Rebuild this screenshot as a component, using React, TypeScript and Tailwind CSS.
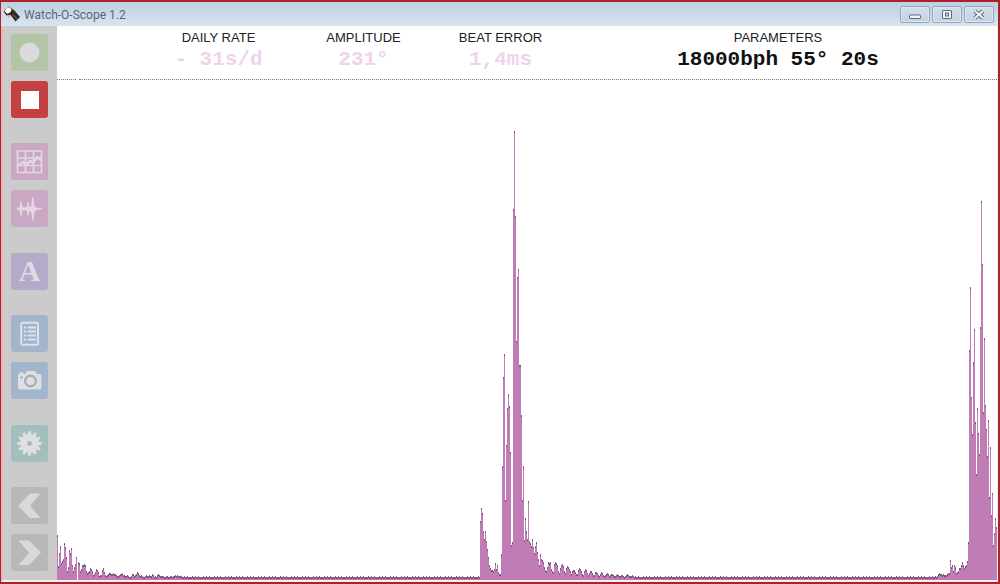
import React from 'react';

const CHART_WIDTH = 940;
const CHART_HEIGHT = 500;

const onset = [
  44, 13, 26, 33, 16, 18, 20, 36, 32, 22, 8, 12, 29, 26, 31, 14, 8, 12, 15, 22, 0, 17, 16, 8, 10, 14, 14, 15, 14, 8, 6, 7,
  8, 11, 10, 8, 4, 5, 7, 10, 9, 7, 3, 4, 4, 9, 11, 7, 4, 3, 4, 5, 6, 6, 5, 5, 6, 5, 5, 4, 3, 3, 4, 5, 5, 6, 4, 4, 3, 3, 4,
  3, 2, 2, 3, 5, 5, 3, 4, 5, 7, 6, 4, 3, 4, 3, 2, 2, 3, 4, 3, 3, 4, 3, 3, 5, 4, 2, 3, 2, 4, 5, 4, 3, 3, 3, 3, 2, 2, 3, 3,
  2, 2, 3, 3, 2, 3, 3, 4, 3, 4, 3, 3, 3,
];

const firstBeat = [
  58, 71, 66, 48, 40, 48, 38, 30, 22, 14, 11, 9, 9, 8, 10, 16, 10, 14, 7, 5, 5, 25, 113, 202, 225, 79, 134, 171, 185, 173,
  127, 34, 37, 370, 448, 363, 238, 302, 310, 214, 214, 164, 79, 113, 39, 61, 48, 40, 78, 38, 36, 33, 40, 32, 26, 33, 37,
  27, 20, 14, 25, 20, 19, 17, 12, 9, 8, 12, 17, 16, 17, 10, 8, 7, 15, 17, 16, 14, 8, 6, 11, 14, 15, 13, 8, 6, 11, 13, 12,
  10, 8, 5, 8, 9, 9, 7, 5, 5, 9, 11, 10, 8, 5, 4, 8, 10, 9, 6, 4, 6, 8, 8, 6, 4, 4, 7, 7, 6, 4, 3, 5, 7, 6, 4, 3, 4, 5, 6,
  5, 3, 4, 5, 5, 4, 3, 3, 4, 5, 4, 3, 3, 4, 4, 3, 2, 3, 4, 5, 4, 3, 3, 3, 4, 3,
];

const secondBeat = [
  3, 5, 6, 5, 5, 4, 5, 4, 4, 4, 5, 6, 6, 19, 12, 14, 8, 14, 12, 6, 7, 8, 11, 11, 14, 17, 14, 11, 13, 14, 18, 37, 229,
  292, 182, 145, 217, 250, 157, 105, 171, 146, 125, 252, 378, 315, 167, 241, 174, 150, 123, 159, 82, 132, 64, 86, 34, 46,
  61, 52,
];

const FIRST_BEAT_START = 423;
const SECOND_BEAT_START = 880;

const samples = Array.from({ length: CHART_WIDTH }, (_, x) => {
  if (x < onset.length) return onset[x];
  if (x >= SECOND_BEAT_START) return secondBeat[x - SECOND_BEAT_START] ?? 0;
  if (x >= FIRST_BEAT_START && x < FIRST_BEAT_START + firstBeat.length) {
    return firstBeat[x - FIRST_BEAT_START];
  }
  return 2 + ((x * 7) % 11 > 7 ? 1 : 0);
});

const bars = samples.map((h, x) => (h ? `M${x} ${CHART_HEIGHT}v${-h}h1v${h}z` : '')).join('');
const caps = samples.map((h, x) => (h ? `M${x} ${CHART_HEIGHT - h - 1}h1v2h-1z` : '')).join('');

function Waveform() {
  return (
    <svg
      role="img"
      aria-label="Beat waveform"
      viewBox={`0 0 ${CHART_WIDTH} ${CHART_HEIGHT}`}
      preserveAspectRatio="none"
      className="block h-full min-h-0 w-full"
      shapeRendering="crispEdges"
    >
      <path d={bars} fill="#c07cb5" />
      <path d={caps} fill="#6b3f68" fillOpacity="0.8" />
    </svg>
  );
}

function ToolButton({ label, tone, children }: { label: string; tone: string; children: React.ReactNode }) {
  return (
    <button
      type="button"
      aria-label={label}
      className={`flex size-[37px] items-center justify-center rounded-[3px] ${tone}`}
    >
      {children}
    </button>
  );
}

function Icon({ children }: { children: React.ReactNode }) {
  return (
    <svg viewBox="0 0 37 37" className="size-[37px]" aria-hidden="true">
      {children}
    </svg>
  );
}

const teeth = Array.from({ length: 12 }, (_, i) => i * 30);

function Sidebar() {
  return (
    <nav className="flex w-[54px] shrink-0 flex-col items-start justify-between bg-[#cbcbcb] pt-2 pb-[9px] pl-2">
      <div className="flex flex-col gap-2.5">
        <ToolButton label="Start" tone="bg-[#b3c5a7]">
          <Icon><circle cx="18.500" cy="18.500" r="10" fill="#dadada" /></Icon>
        </ToolButton>
        <ToolButton label="Stop" tone="bg-[#c63f41]">
          <Icon><path d="M10 10h18v18H10z" fill="#fff" /></Icon>
        </ToolButton>
      </div>
      <div className="flex flex-col gap-2.5">
        <ToolButton label="Trace chart" tone="bg-[#c9a7c5]">
          <Icon>
            <g fill="none" stroke="#e4d6e2">
              <path d="M6.500 8h24v21.500h-24zM14.500 8v21.500M22.500 8v21.500M6.500 15h24M6.500 22.500h24" strokeWidth="1.700" />
              <path d="M7 22.500l5-3.500 3.500 2.500 3.500-3.500 3 1.500 4.500-5.500 4 3.500" strokeWidth="2.600" />
            </g>
          </Icon>
        </ToolButton>
        <ToolButton label="Waveform" tone="bg-[#c9a7c5]">
          <Icon>
            <path
              d="M6 17.800l2.700-.6.9-6.200h.8l1 6.200h4.400l.8-5.500h.9l1 5.200 1.600-.9 1.100-9h1l1.500 9.500 2.300 1.200 5 .6v1l-5 .7-2.300 1.200-1.500 9.500h-1l-1.100-9-1.600-1-1 5h-.9l-.8-5.200h-4.400l-1 5.500h-.8l-.9-5.500-2.700-.8z"
              fill="#e4d6e2"
            />
          </Icon>
        </ToolButton>
      </div>
      <ToolButton label="Text" tone="bg-[#b5aaca]">
        <span className="font-['Liberation_Serif',serif] text-[30px] leading-none font-bold text-[#dedbe5]">A</span>
      </ToolButton>
      <div className="flex flex-col gap-2.5">
        <ToolButton label="Report" tone="bg-[#a2b5cd]">
          <Icon>
            <rect x="10.200" y="7.700" width="16.800" height="22" rx="1.500" fill="none" stroke="#dde3ea" strokeWidth="2" />
            <path d="M16.500 12.500H25M16.500 16.500H25M16.500 20.500H25M16.500 24.500H25" stroke="#dde3ea" strokeWidth="2" />
            <path d="M13 12.500h2M13 16.500h2M13 20.500h2M13 24.500h2" stroke="#dde3ea" strokeWidth="2" />
          </Icon>
        </ToolButton>
        <ToolButton label="Snapshot" tone="bg-[#a2b5cd]">
          <Icon>
            <path
              d="M8.500 12V10.500h4V12h1.500l2-3h8l2 3h2.500q2 0 2 2V25q0 2.500-2.500 2.500H9.500Q7 27.500 7 25V14Q7 12 8.500 12z"
              fill="#dde0e3"
            />
            <circle cx="19.500" cy="19" r="5.300" fill="#dde0e3" stroke="#a6aeb7" strokeWidth="2.400" />
            <circle cx="10.500" cy="15.500" r="1.200" fill="#a6aeb7" />
          </Icon>
        </ToolButton>
      </div>
      <ToolButton label="Settings" tone="bg-[#a3bfbd]">
        <Icon>
          <g fill="#dce0e0">
            <circle cx="18.500" cy="18.500" r="9.500" />
            {teeth.map((angle) => (
              <path key={angle} d="M16.700 10l.5-3.800h2.600l.5 3.800z" transform={`rotate(${angle} 18.500 18.500)`} />
            ))}
          </g>
          <circle cx="18.500" cy="18.500" r="2.400" fill="#aab4b4" />
        </Icon>
      </ToolButton>
      <div className="flex flex-col gap-2.5">
        <ToolButton label="Previous" tone="bg-[#b8b8b8]">
          <Icon><path d="M19 6.500h10.500L19 18.800l10.500 12.200H19L7 18.800z" fill="#d9d9d9" /></Icon>
        </ToolButton>
        <ToolButton label="Next" tone="bg-[#b8b8b8]">
          <Icon><path d="M18 6.500H7.500L18 18.800 7.500 31H18l12-12.200z" fill="#d9d9d9" /></Icon>
        </ToolButton>
      </div>
    </nav>
  );
}

function WindowButton({ label, children }: { label: string; children: React.ReactNode }) {
  return (
    <button
      type="button"
      aria-label={label}
      className="flex h-[17px] w-[30px] items-center justify-center rounded-[2px] border border-[#94a5b9] bg-linear-to-b from-[#d3dfec] to-[#c3d2e3] shadow-[inset_0_0_0_1px_#dce7f2]"
    >
      <svg viewBox="0 0 14 11" className="h-[11px] w-[14px]" aria-hidden="true">
        {children}
      </svg>
    </button>
  );
}

function TitleBar() {
  return (
    <header className="flex h-6 shrink-0 items-center bg-linear-to-b from-[#bfcfe1] to-[#d8e4f0] pr-1 pl-[3px]">
      <svg viewBox="0 0 16 16" className="size-4" aria-hidden="true">
        <path d="M5.500 7.500l4-4 6.500 7.500-4.500 4.500z" fill="#2e2724" />
        <path d="M9 8.500l4 4.500" stroke="#78503c" strokeWidth="1.200" />
        <path d="M1 3.500L5 .5l4.500 3.500-3 5L2.500 9.500 0 6z" fill="#2b2826" />
        <ellipse cx="4.200" cy="4.500" rx="3.300" ry="2.700" transform="rotate(-40 4.200 4.500)" fill="#fffef5" />
        <path d="M3 9l2 3 2-3z" fill="#c9b295" />
      </svg>
      <h1 className="ml-1 flex-1 pt-0.5 font-[Roboto,sans-serif] text-xs text-[#5b6675]">Watch-O-Scope 1.2</h1>
      <div className="flex gap-0.5">
        <WindowButton label="Minimize">
          <rect x="1.500" y="6" width="11" height="3.500" rx=".5" fill="#f2f5f8" stroke="#5f6a78" />
        </WindowButton>
        <WindowButton label="Maximize">
          <rect x="2.500" y="1.500" width="9" height="8" rx=".5" fill="#f2f5f8" stroke="#5f6a78" />
          <rect x="5.500" y="4" width="3" height="3" fill="#c3d2e3" stroke="#5f6a78" />
        </WindowButton>
        <WindowButton label="Close">
          <path d="M3 2l8 7M11 2L3 9" stroke="#5f6a78" strokeWidth="4.200" />
          <path d="M3 2l8 7M11 2L3 9" stroke="#f2f5f8" strokeWidth="2.200" />
        </WindowButton>
      </div>
    </header>
  );
}

function Reading({ label, value, tone }: { label: string; value: string; tone: string }) {
  return (
    <div className="flex flex-col items-center whitespace-nowrap">
      <dt className="text-[13px] leading-5 text-[#222222]">{label}</dt>
      <dd className={`font-['Liberation_Mono',monospace] text-[21px] leading-6 font-bold whitespace-pre ${tone}`}>
        {value}
      </dd>
    </div>
  );
}

export default function App() {
  return (
    <div className="flex h-screen flex-col border-y-2 border-r-2 border-l border-[#a8232c] bg-white font-['Liberation_Sans',Arial,sans-serif]">
      <TitleBar />
      <div className="flex min-h-0 flex-1 border-r border-b-2 border-l-2 border-r-[#f6e9ec] border-b-[#f6eef0] border-l-[#eab4b6]">
        <Sidebar />
        <main className="flex min-w-0 flex-1 flex-col">
          <dl className="grid h-[53px] shrink-0 grid-cols-[145fr_145fr_129fr_426fr] pt-0.5 pr-1.5 pl-[89px]">
            <Reading label="DAILY RATE" value="- 31s/d" tone="text-[#efd3eb]" />
            <Reading label="AMPLITUDE" value="231°" tone="text-[#efd3eb]" />
            <Reading label="BEAT ERROR" value="1,4ms" tone="text-[#efd3eb]" />
            <Reading label="PARAMETERS" value="18000bph 55° 20s" tone="text-[#111111]" />
          </dl>
          <div className="flex gap-[3px]" aria-hidden="true">
            <div className="w-[19px] border-t border-dotted border-[#777777]" />
            <div className="flex-1 border-t border-dotted border-[#777777]" />
          </div>
          <div className="min-h-0 flex-1">
            <Waveform />
          </div>
        </main>
      </div>
    </div>
  );
}
